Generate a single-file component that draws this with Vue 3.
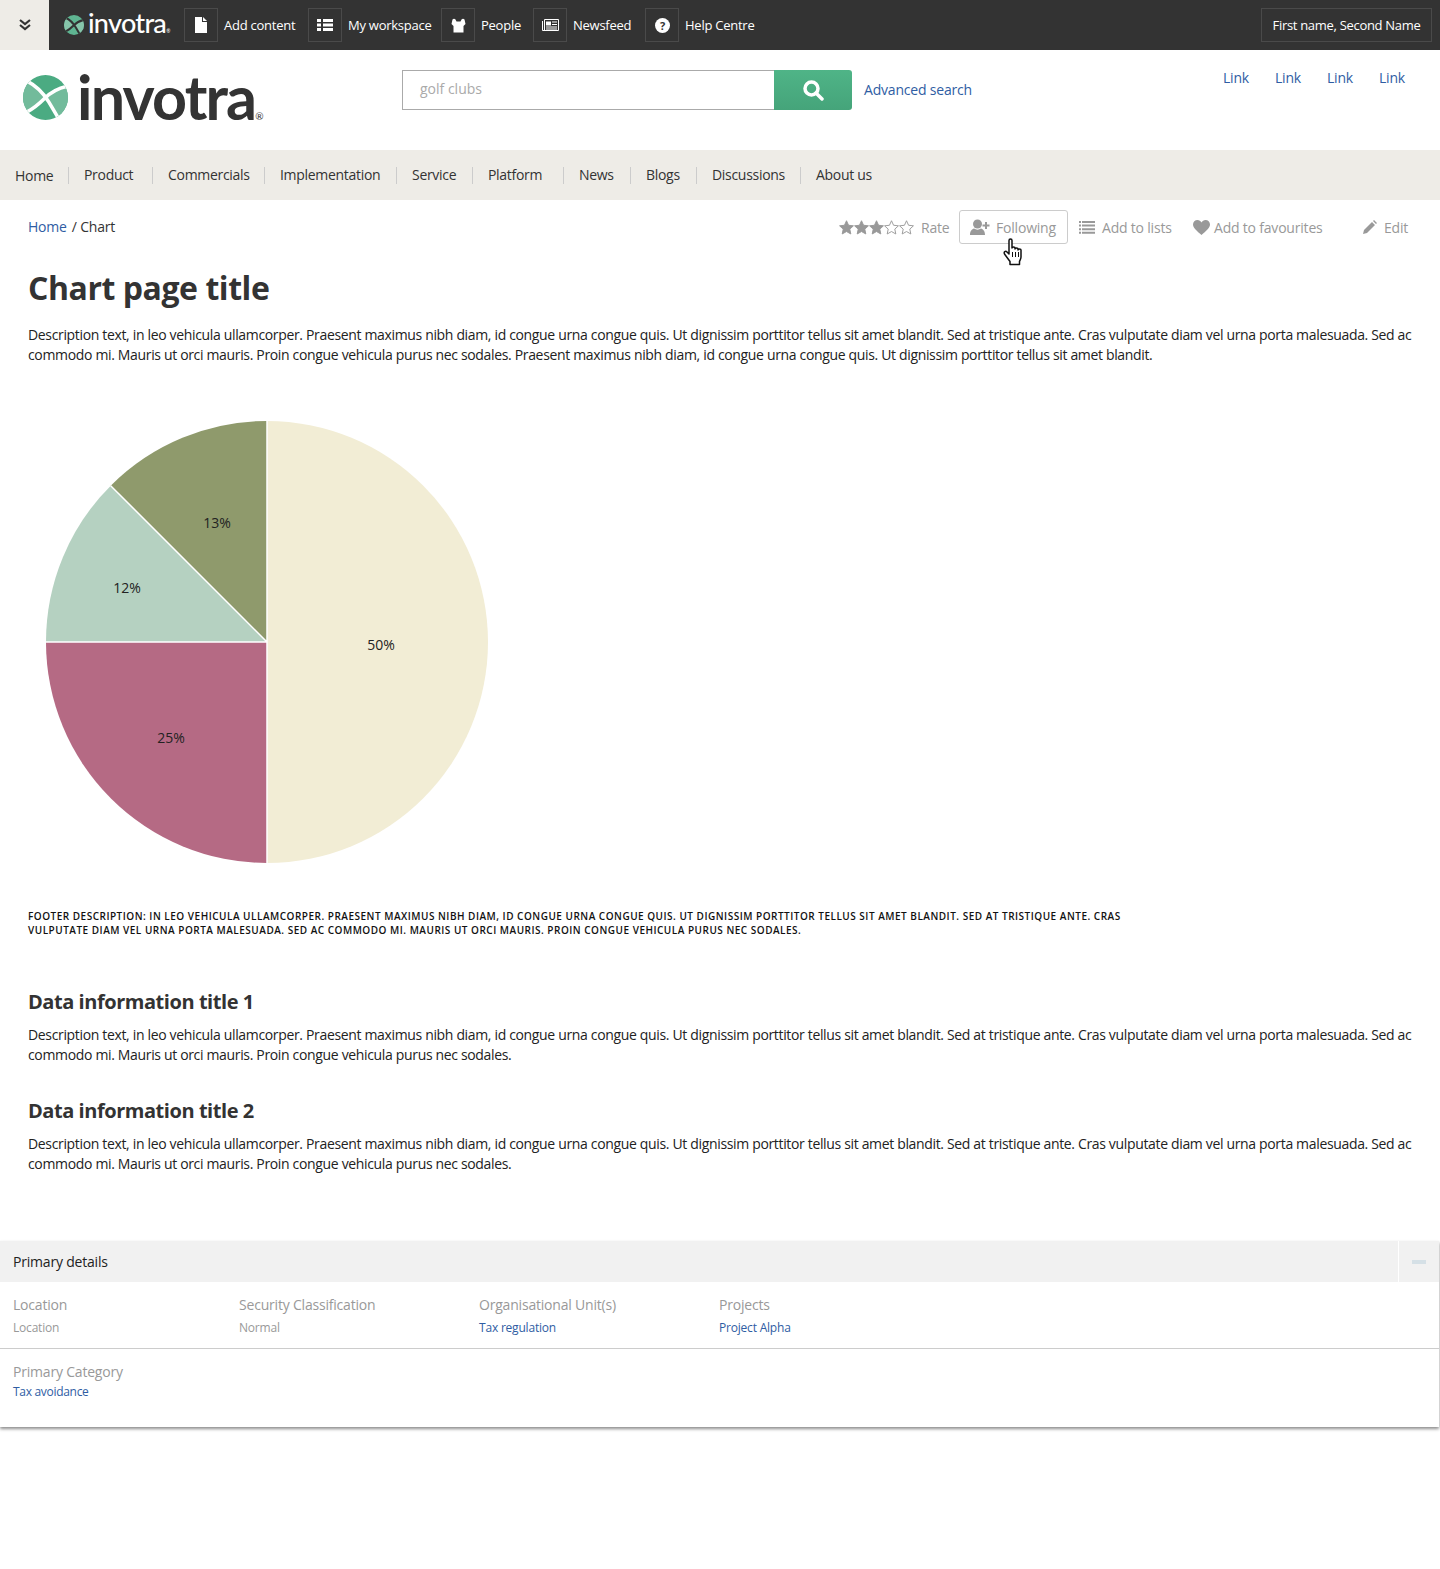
<script setup>
const topItems = ['Add content', 'My workspace', 'People', 'Newsfeed', 'Help Centre']
const navItems = ['Home', 'Product', 'Commercials', 'Implementation', 'Service', 'Platform', 'News', 'Blogs', 'Discussions', 'About us']
const headerLinks = ['Link', 'Link', 'Link', 'Link']
const lorem = 'Description text, in leo vehicula ullamcorper. Praesent maximus nibh diam, id congue urna congue quis. Ut dignissim porttitor tellus sit amet blandit. Sed at tristique ante. Cras vulputate diam vel urna porta malesuada. Sed ac commodo mi. Mauris ut orci mauris. Proin congue vehicula purus nec sodales.'
const details = [
  { label: 'Location', value: 'Location' },
  { label: 'Security Classification', value: 'Normal' },
  { label: 'Organisational Unit(s)', value: 'Tax regulation', link: true },
  { label: 'Projects', value: 'Project Alpha', link: true },
]
const star = 'M8 .8l2.2 4.8 5.2.6-3.9 3.5 1.1 5.2L8 12.3l-4.6 2.6 1.1-5.2L.6 6.2l5.2-.6z'
const stars = [true, true, true, false, false]

// logo mark, 44 unit box
const markLeft = 'M4 6C12 10 18 17 22 22 15 29 10 33 4 36L-5 40V0z'
const markRight = 'M22 22C27 17 34 13 43 11H50V50L35 43C31 36 28 31 22 22z'
const markSwoosh = 'M4 6C12 10 20 18 25 26 28 31 31 36 35 43M43 11C34 13 27 17 21 23 15 29 10 33 4 36'
</script>

<template>
  <div class="page">
    <div class="topbar">
      <div class="toggle">
        <svg width="14" height="14" viewBox="0 0 14 14"><path d="M2 2l5 4 5-4M2 7l5 4 5-4" fill="none" stroke="#333" stroke-width="2.2"/></svg>
      </div>
      <div class="top-logo">
        <svg class="mark" viewBox="0 0 44 44" width="20" height="20">
          <clipPath id="top-mark-clip"><circle cx="22" cy="22" r="22"/></clipPath>
          <g clip-path="url(#top-mark-clip)">
            <rect width="44" height="44" fill="#5fb592"/>
            <path :d="markLeft" fill="#86c5aa"/>
            <path :d="markRight" fill="#86c5aa"/>
            <path :d="markSwoosh" fill="none" stroke="#333" stroke-width="4.500"/>
          </g>
        </svg>
        <span class="top-word">invotra<i>®</i></span>
      </div>
      <div class="top-items">
        <div v-for="(item, i) in topItems" :key="item" class="top-item">
          <span class="icon-box">
            <svg v-if="i === 0" width="14" height="16" viewBox="0 0 14 16"><path d="M1 0h7v5h5v11H1zM9 0l4 4H9z" fill="#fff"/></svg>
            <svg v-if="i === 1" width="16" height="14" viewBox="0 0 16 14"><path d="M0 1h4v3H0zM6 1h10v3H6zM0 5.5h4v3H0zM6 5.5h10v3H6zM0 10h4v3H0zM6 10h10v3H6z" fill="#fff"/></svg>
            <svg v-if="i === 2" width="15" height="15" viewBox="0 0 15 15"><path d="M.5 6L1.500 1.500Q3 0 4.500 1.500L5.500 3.500H9.500L10.500 1.500Q12 0 13.500 1.500L14.500 6 12.500 8V14.500H2.500V8z" fill="#fff"/></svg>
            <svg v-if="i === 3" width="17" height="12" viewBox="0 0 17 12"><path d="M.5 2v9.500h16V.5h-14v11" fill="none" stroke="#fff"/><path d="M4 2.500h5v4H4zM10 2.500h5v1h-5zM10 5h5v1h-5zM4 7.500h11v1H4zM4 9.500h11v1H4z" fill="#fff"/></svg>
            <svg v-if="i === 4" width="15" height="15" viewBox="0 0 15 15"><circle cx="7.500" cy="7.500" r="7.500" fill="#fff"/><text x="7.500" y="11.500" class="qmark" text-anchor="middle">?</text></svg>
          </span>
          <span class="top-label">{{ item }}</span>
        </div>
      </div>
      <div class="user-box">First name, Second Name</div>
    </div>

    <header class="header">
      <div class="logo">
        <svg class="logo-mark" viewBox="0 0 44 44" width="45" height="45">
          <clipPath id="logo-mark-clip"><circle cx="22" cy="22" r="22"/></clipPath>
          <g clip-path="url(#logo-mark-clip)">
            <rect width="44" height="44" fill="#4bab82"/>
            <path :d="markLeft" fill="#72bb9b"/>
            <path :d="markRight" fill="#72bb9b"/>
            <path :d="markSwoosh" fill="none" stroke="#fff" stroke-width="3.500"/>
          </g>
        </svg>
        <span class="logo-word">invotra<i>®</i></span>
      </div>
      <div class="search">
        <div class="search-input">golf clubs</div>
        <div class="search-btn">
          <svg width="22" height="22" viewBox="0 0 22 22"><circle cx="9.500" cy="9.500" r="6.500" fill="none" stroke="#fff" stroke-width="3.500"/><path d="M14 14l6 6" stroke="#fff" stroke-width="3.500" stroke-linecap="round"/></svg>
        </div>
        <a class="link adv">Advanced search</a>
      </div>
      <div class="header-links">
        <a v-for="(l, i) in headerLinks" :key="i" class="link">{{ l }}</a>
      </div>
    </header>

    <nav class="nav">
      <span v-for="item in navItems" :key="item" class="nav-item">{{ item }}</span>
    </nav>

    <div class="crumb-row">
      <div class="crumbs"><a class="link">Home</a><span class="crumb-sep">/ Chart</span></div>
      <div class="actions">
        <div class="rate">
          <svg v-for="(on, i) in stars" :key="i" width="15" height="15" viewBox="0 0 16 16">
            <path :d="star" :fill="on ? '#999' : '#fff'" stroke="#999" stroke-width="1"/>
          </svg>
          <span class="rate-label">Rate</span>
        </div>
        <div class="following">
          <svg width="20" height="17" viewBox="0 0 20 17"><circle cx="7.500" cy="5" r="4.500" fill="#999"/><path d="M0 16c0-4 2-6 4-6.500 2 1.500 5 1.500 7 0 2 .5 4 2.500 4 6.500z" fill="#999"/><path d="M15 3h2v2.500h2.500v2H17V10h-2V7.500h-2.500v-2H15z" fill="#999"/></svg>
          <span>Following</span>
          <svg class="hand" width="22" height="28" viewBox="0 0 22 28">
            <path d="M6 2.500c0-2 3-2 3 0V10c0-1.500 3-1.500 3 0v1c0-1.500 3-1.500 3 0v1c0-1.500 3-1.500 3 0v7c0 2-1 3-1.500 4.500v3H7v-3L1.500 16c-1-2 1-3.500 2.500-2l2 2z" fill="#fff" stroke="#111" stroke-width="1.500" stroke-linejoin="round"/>
            <path d="M9.500 14v5M12.500 14v5M15.500 14v5" stroke="#111"/>
          </svg>
        </div>
        <div class="act lists">
          <svg width="16" height="13" viewBox="0 0 16 13"><path d="M0 0h2v2H0zM3 0h13v2H3zM0 3.600h2v2H0zM3 3.600h13v2H3zM0 7.200h2v2H0zM3 7.200h13v2H3zM0 10.800h2v2H0zM3 10.800h13v2H3z" fill="#999"/></svg>
          <span>Add to lists</span>
        </div>
        <div class="act favs">
          <svg width="17" height="15" viewBox="0 0 17 15"><path d="M8.500 15C4 11 0 8 0 4.500 0 2 2 0 4.500 0c1.700 0 3.200.9 4 2.400C9.300.9 10.800 0 12.500 0 15 0 17 2 17 4.500 17 8 13 11 8.500 15z" fill="#999"/></svg>
          <span>Add to favourites</span>
        </div>
        <div class="act edit">
          <svg width="14" height="14" viewBox="0 0 14 14"><path d="M0 14l1-4 8-8 3 3-8 8zM10 1l1-1 3 3-1 1z" fill="#999"/></svg>
          <span>Edit</span>
        </div>
      </div>
    </div>

    <main class="content">
      <h1>Chart page title</h1>
      <p class="desc">Description text, in leo vehicula ullamcorper. Praesent maximus nibh diam, id congue urna congue quis. Ut dignissim porttitor tellus sit amet blandit. Sed at tristique ante. Cras vulputate diam vel urna porta malesuada. Sed ac commodo mi. Mauris ut orci mauris. Proin congue vehicula purus nec sodales. Praesent maximus nibh diam, id congue urna congue quis. Ut dignissim porttitor tellus sit amet blandit.</p>

      <svg class="pie" width="444" height="444" viewBox="-222 -222 444 444">
        <path d="M0 0V-221A221 221 0 0 1 0 221z" fill="#f2edd5"/>
        <path d="M0 0V221A221 221 0 0 1 -221 0z" fill="#b56a84"/>
        <path d="M0 0H-221A221 221 0 0 1 -156.300 -156.300z" fill="#b5d1c1"/>
        <path d="M0 0L-156.300 -156.300A221 221 0 0 1 0 -221z" fill="#8f9a6c"/>
        <path d="M0 -221V221M0 0H-221M0 0L-156.300 -156.300" stroke="#fff" stroke-width="1.500" fill="none"/>
        <text x="114" y="8" class="pie-label" text-anchor="middle">50%</text>
        <text x="-96" y="101" class="pie-label" text-anchor="middle">25%</text>
        <text x="-140" y="-49" class="pie-label" text-anchor="middle">12%</text>
        <text x="-50" y="-114" class="pie-label" text-anchor="middle">13%</text>
      </svg>

      <p class="foot-desc">Footer description: in leo vehicula ullamcorper. Praesent maximus nibh diam, id congue urna congue quis. Ut dignissim porttitor tellus sit amet blandit. Sed at tristique ante. Cras vulputate diam vel urna porta malesuada. Sed ac commodo mi. Mauris ut orci mauris. Proin congue vehicula purus nec sodales.</p>

      <section class="info first">
        <h2>Data information title 1</h2>
        <p class="desc">{{ lorem }}</p>
      </section>
      <section class="info">
        <h2>Data information title 2</h2>
        <p class="desc">{{ lorem }}</p>
      </section>
    </main>

    <section class="panel">
      <div class="panel-head">
        <span>Primary details</span>
        <span class="panel-toggle"><i></i></span>
      </div>
      <div class="detail-row">
        <div v-for="d in details" :key="d.label" class="detail">
          <div class="d-label">{{ d.label }}</div>
          <div class="d-value" :class="{ 'd-link': d.link }">{{ d.value }}</div>
        </div>
      </div>
      <div class="detail-row second">
        <div class="detail">
          <div class="d-label">Primary Category</div>
          <div class="d-value d-link">Tax avoidance</div>
        </div>
      </div>
    </section>
  </div>
</template>

<style scoped>
.page {
  width: 1440px;
  height: 1569px;
  overflow: hidden;
  background: #fff;
  color: #222;
  font-family: "Open Sans", "Noto Sans", sans-serif;
  font-size: 14px;
  letter-spacing: -0.2px;
}
.link { color: #2f5da3; }

.topbar {
  height: 50px;
  background: #333;
  display: flex;
  align-items: center;
  color: #fff;
}
.toggle {
  width: 49px;
  height: 50px;
  background: #eeece7;
  display: flex;
  align-items: center;
  justify-content: center;
}
.top-logo {
  width: 135px;
  padding-left: 15px;
  display: flex;
  align-items: center;
  box-sizing: border-box;
  gap: 4px;
}
.top-word {
  font-family: Lato, sans-serif;
  font-weight: 500;
  font-size: 27px;
  line-height: 30px;
  letter-spacing: -0.7px;
  color: #fff;
  position: relative;
  top: 2px;
}
.top-word i { font-size: 5px; font-style: normal; letter-spacing: 0; }
.top-items {
  display: grid;
  grid-template-columns: 124px 133px 92px 112px auto;
}
.top-item { display: flex; align-items: center; }
.icon-box {
  width: 34px;
  height: 34px;
  box-sizing: border-box;
  border: 1px solid #4a4a4a;
  display: flex;
  align-items: center;
  justify-content: center;
  margin-right: 6px;
}
.qmark { font: 700 11px "Open Sans", sans-serif; fill: #333; }
.top-label { font-size: 13px; letter-spacing: -0.25px; }
.user-box {
  margin-left: auto;
  margin-right: 8px;
  width: 171px;
  height: 34px;
  box-sizing: border-box;
  border: 1px solid #4a4a4a;
  font-size: 13px;
  letter-spacing: -0.3px;
  display: flex;
  align-items: center;
  justify-content: center;
}

.header {
  height: 100px;
  display: grid;
  grid-template-columns: 402px 821px 1fr;
}
.logo {
  display: flex;
  align-items: flex-start;
  padding: 25px 0 0 23px;
  gap: 9px;
}
.logo-word {
  font-family: Lato, sans-serif;
  font-weight: 700;
  font-size: 61px;
  line-height: 43px;
  letter-spacing: -1.8px;
  color: #333;
}
.logo-word i { font-size: 10px; font-style: normal; font-weight: 400; letter-spacing: 0; }
.search {
  display: flex;
  align-items: center;
  padding-top: 20px;
  height: 40px;
}
.search-input {
  width: 372px;
  height: 40px;
  box-sizing: border-box;
  border: 1px solid #aaa;
  border-right: 0;
  padding-left: 17px;
  line-height: 36px;
  color: #aaa;
  letter-spacing: 0;
}
.search-btn {
  width: 78px;
  height: 40px;
  background: linear-gradient(#4fb487, #45a47a);
  border-radius: 0 3px 3px 0;
  display: flex;
  align-items: center;
  justify-content: center;
}
.adv { margin: 0 0 2px 12px; }
.header-links {
  display: grid;
  grid-template-columns: repeat(4, 52px);
  padding-top: 18px;
  height: 20px;
}

.nav {
  height: 50px;
  background: #eeece7;
  display: grid;
  grid-template-columns: 68px 84px 112px 132px 76px 91px 67px 66px 104px auto;
  align-items: center;
  color: #333;
  letter-spacing: -0.3px;
}
.nav-item {
  height: 17px;
  line-height: 15px;
  padding-left: 15px;
  border-left: 1px solid #ccc;
  white-space: nowrap;
}
.nav-item:first-child { border-left: 0; line-height: 17px; }

.crumb-row {
  height: 55px;
  display: flex;
  justify-content: space-between;
  align-items: flex-start;
}
.crumbs { padding: 18px 0 0 28px; line-height: 18px; }
.crumb-sep { margin-left: 5px; color: #333; }
.actions {
  display: grid;
  grid-template-columns: 120px 120px 114px 170px 77px;
  padding: 10px 0 0 0;
  align-items: center;
  color: #999;
}
.rate { display: flex; align-items: center; }
.rate-label { margin-left: 7px; }
.following {
  position: relative;
  width: 109px;
  height: 34px;
  box-sizing: border-box;
  border: 1px solid #ccc;
  border-radius: 3px;
  display: flex;
  align-items: center;
  padding-left: 10px;
  gap: 6px;
}
.hand { position: absolute; left: 43px; top: 27px; }
.act { display: flex; align-items: center; gap: 7px; }
.favs { gap: 4px; }

.content { padding: 0 22px 0 28px; }
h1 {
  margin: 11px 0 0;
  font-size: 32px;
  line-height: 44px;
  font-weight: 700;
  color: #333;
  letter-spacing: -0.45px;
}
.desc {
  margin: 0;
  line-height: 20px;
  color: #222;
  letter-spacing: -0.34px;
}
h1 + .desc { margin-top: 15px; }
.pie {
  display: block;
  margin: 55px 0 0 17px;
}
.pie-label { font: 14px "Open Sans", sans-serif; fill: #222; letter-spacing: 0; }
.foot-desc {
  margin: 45px 0 0;
  width: 1100px;
  font-size: 10px;
  line-height: 14px;
  font-weight: 600;
  text-transform: uppercase;
  color: #111;
  letter-spacing: 0.5px;
}
.info.first { margin-top: 50px; }
.info { margin-top: 31px; }
h2 {
  margin: 0 0 8px;
  font-size: 20px;
  line-height: 30px;
  font-weight: 700;
  color: #333;
  letter-spacing: -0.45px;
}

.panel {
  margin-top: 67px;
  width: 1439px;
  box-shadow: 0 2px 3px rgba(0, 0, 0, 0.45);
}
.panel-head {
  height: 41px;
  background: #f1f1f1;
  display: flex;
  align-items: center;
  justify-content: space-between;
  padding-left: 13px;
  color: #222;
}
.panel-toggle {
  width: 41px;
  height: 41px;
  box-sizing: border-box;
  border-left: 1px solid #fff;
  display: flex;
  align-items: center;
  justify-content: center;
}
.panel-toggle i { width: 14px; height: 4px; background: #d5e0e6; }
.detail-row {
  display: grid;
  grid-template-columns: 226px 240px 240px auto;
  height: 67px;
  padding: 13px 0 0 13px;
  box-sizing: border-box;
  border-bottom: 1px solid #ccc;
}
.detail-row.second { height: 78px; border-bottom: 0; }
.d-label { color: #999; line-height: 20px; }
.d-value { color: #999; font-size: 12px; line-height: 18px; margin-top: 4px; }
.second .d-value { margin-top: 1px; letter-spacing: -0.3px; }
.d-link { color: #2f5da3; }
</style>
